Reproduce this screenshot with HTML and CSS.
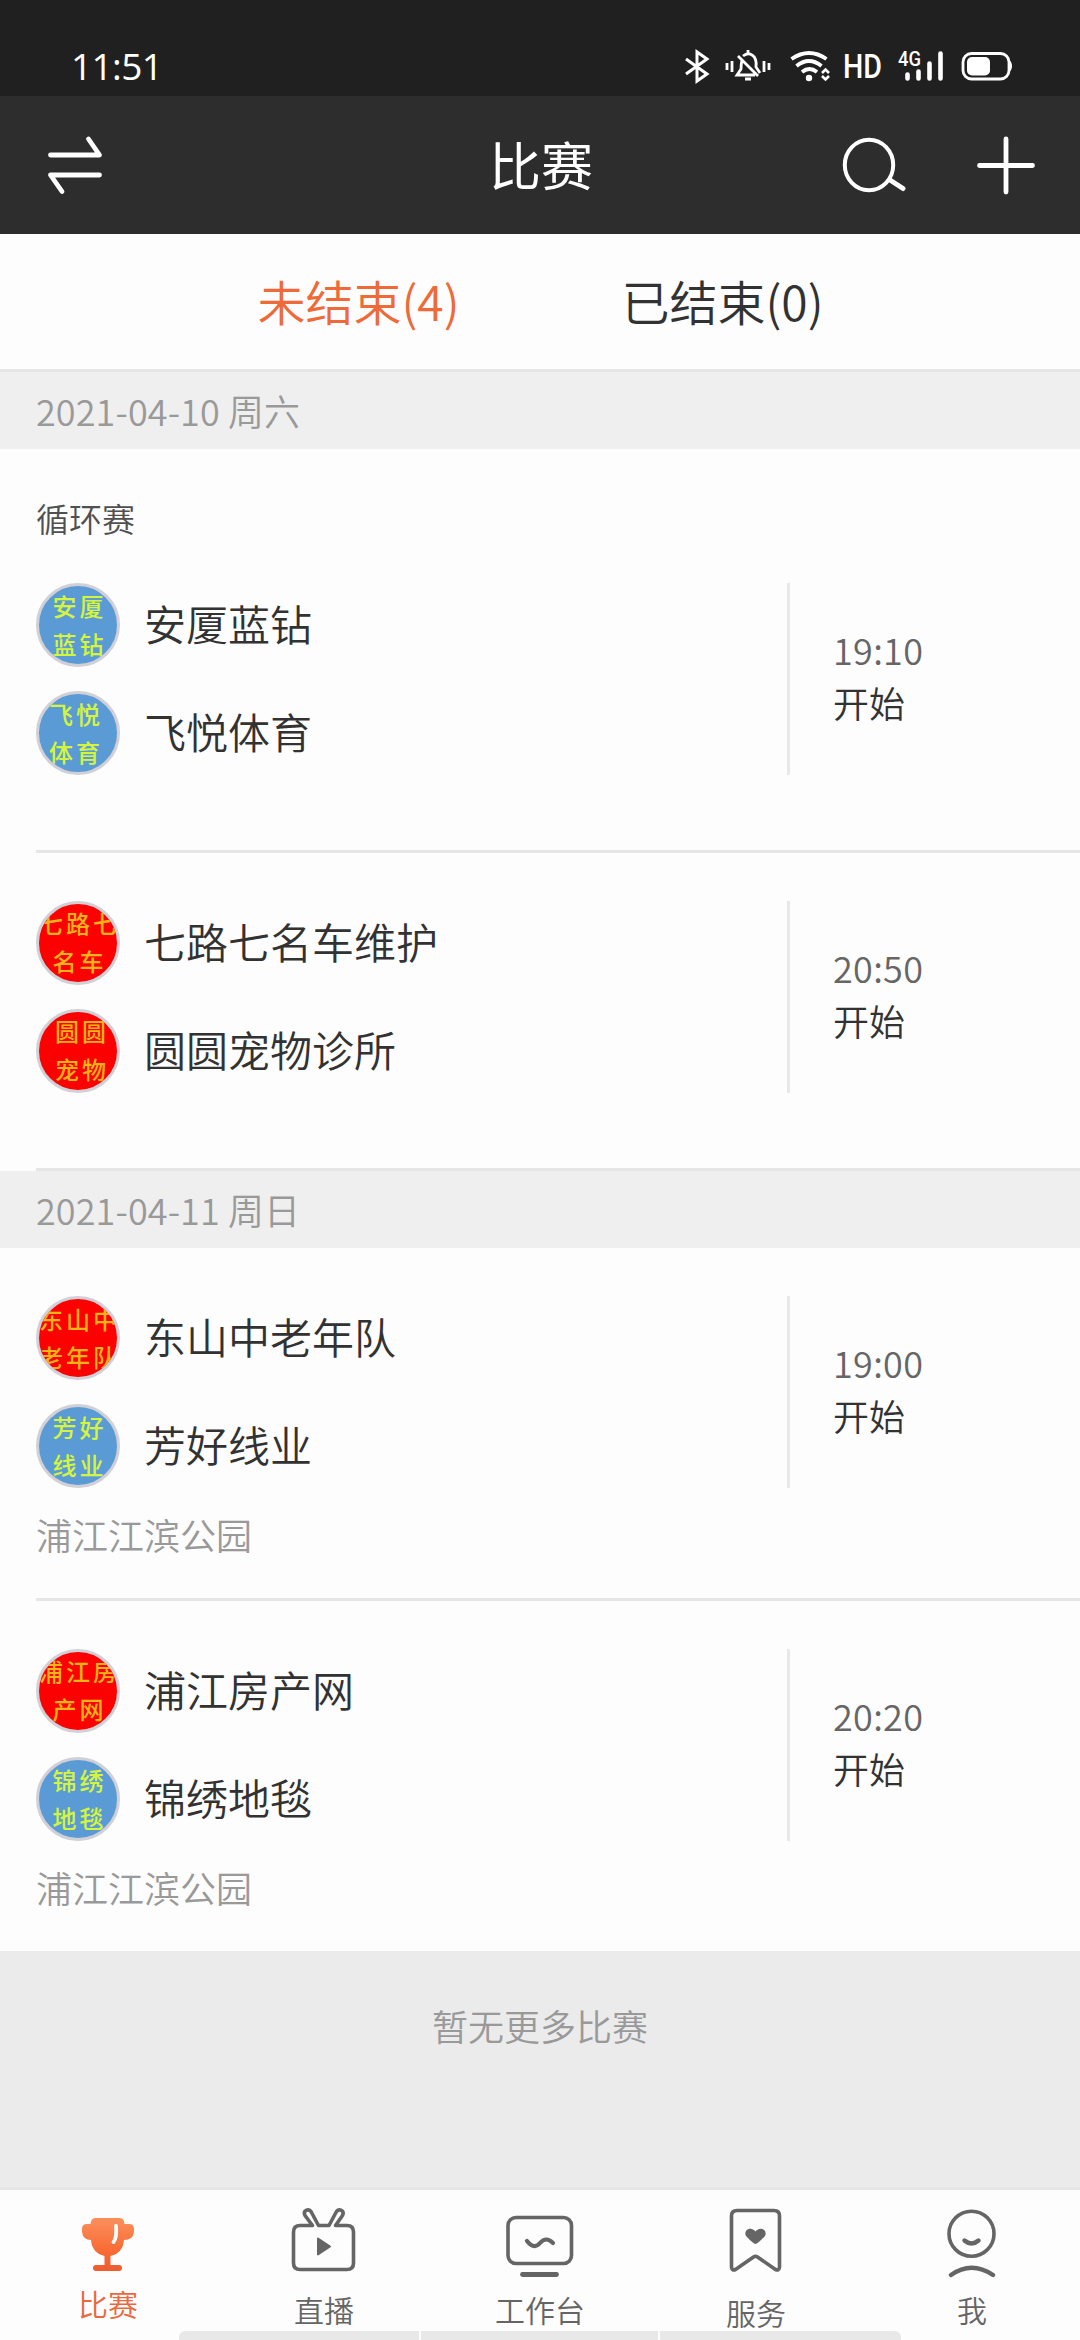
FILE: index.html
```html
<!DOCTYPE html>
<html lang="zh-CN">
<head>
<meta charset="utf-8">
<title>比赛</title>
<link rel="stylesheet" href="styles.css">
</head>
<body>
<div class="screen">
  <div class="status">
    <span class="clock">11:51</span>
    <svg class="status-icons" width="332" height="36" viewBox="0 0 332 36" fill="none" stroke="#fff">
      <path d="M5 11 26 26 16 33V4L26 11 5 26" stroke-width="3"/>
      <g stroke-width="2.8">
        <path d="M46 15v7M51 13v11M83 13v11M88 15v7"/>
        <path d="M61 12q-1 4-1 9l-4 6h18M62 8q5-4 9-1 5 3 4 12l4 6M57 8l20 20M67 5V2M64 31h6"/>
      </g>
      <g stroke-width="3.8">
        <path d="M110.500 11q17.500-12 35 0M115.500 18q12.500-10 25 0M121 24q7.500-6 15 0"/>
        <circle cx="128" cy="30" r="3.200" fill="#fff" stroke="none"/>
        <path d="M141 25l3.500-3.500 3.500 3.500M141 28l3.500 3.500 3.500-3.500" stroke-width="2.600"/>
      </g>
      <g class="status-text">
        <text x="162" y="30" font-size="33" textLength="39" lengthAdjust="spacingAndGlyphs">HD</text>
        <text x="217" y="17.500" font-size="20.500" textLength="23" lengthAdjust="spacingAndGlyphs">4G</text>
      </g>
      <path d="M226.500 26.500v4M237.500 23.500v7M248.500 15.500v15M259.500 5.500v25" stroke-width="4.600" stroke-linecap="round"/>
      <rect x="282" y="5.500" width="46" height="25.500" rx="8.500" stroke-width="2.800"/>
      <rect x="286" y="9" width="23" height="18.500" rx="5" fill="#fff" stroke="none"/>
      <path d="M328 12q3 2 3 6t-3 6z" fill="#fff" stroke="none"/>
    </svg>
  </div>
  <header class="nav">
    <svg width="60" height="60" viewBox="0 0 60 60" fill="none" stroke="#fff" stroke-width="4.800" stroke-linecap="round" stroke-linejoin="round">
      <path d="M5.500 20H54.500L43.500 4M54.500 40H5.500L17 56.500"/>
    </svg>
    <h1 class="title">比赛</h1>
    <div class="actions">
      <svg width="66" height="60" viewBox="0 0 66 60" fill="none" stroke="#fff" stroke-width="4" stroke-linecap="round">
        <ellipse cx="29" cy="30" rx="24.200" ry="25.200"/><path d="M50 45l13 8.500" stroke-width="5"/>
      </svg>
      <svg width="60" height="60" viewBox="0 0 60 60" fill="none" stroke="#fff" stroke-width="4.800" stroke-linecap="round">
        <path d="M3.500 30.500h53M30 4v53"/>
      </svg>
    </div>
  </header>
  <nav class="tabs">
    <span class="tab tab-on">未结束(4)</span>
    <span class="tab">已结束(0)</span>
  </nav>
  <main>
    <div class="date">2021-04-10 周六</div>
    <section class="match">
      <div class="stage">循环赛</div>
      <div class="row">
        <div class="teams">
          <div class="team"><span class="logo blue"><span>安厦</span><span>蓝钻</span></span><span class="name">安厦蓝钻</span></div>
          <div class="team"><span class="logo blue left"><span>飞悦</span><span>体育</span></span><span class="name">飞悦体育</span></div>
        </div>
        <div class="time"><span class="clock-time">19:10</span><b>开始</b></div>
      </div>
      <div class="foot"></div>
    </section>
    <section class="match">
      <div class="row">
        <div class="teams">
          <div class="team"><span class="logo red high"><span>七路七</span><span>名车</span></span><span class="name">七路七名车维护</span></div>
          <div class="team"><span class="logo red high right"><span>圆圆</span><span>宠物</span></span><span class="name">圆圆宠物诊所</span></div>
        </div>
        <div class="time"><span class="clock-time">20:50</span><b>开始</b></div>
      </div>
      <div class="foot"></div>
    </section>
    <div class="date">2021-04-11 周日</div>
    <section class="match">
      <div class="row">
        <div class="teams">
          <div class="team"><span class="logo red"><span>东山中</span><span>老年队</span></span><span class="name">东山中老年队</span></div>
          <div class="team"><span class="logo blue"><span>芳好</span><span>线业</span></span><span class="name">芳好线业</span></div>
        </div>
        <div class="time"><span class="clock-time">19:00</span><b>开始</b></div>
      </div>
      <div class="foot venue">浦江江滨公园</div>
    </section>
    <section class="match last">
      <div class="row">
        <div class="teams">
          <div class="team"><span class="logo red high"><span>浦江房</span><span>产网</span></span><span class="name">浦江房产网</span></div>
          <div class="team"><span class="logo blue"><span>锦绣</span><span>地毯</span></span><span class="name">锦绣地毯</span></div>
        </div>
        <div class="time"><span class="clock-time">20:20</span><b>开始</b></div>
      </div>
      <div class="foot venue">浦江江滨公园</div>
    </section>
    <p class="end">暂无更多比赛</p>
  </main>
  <footer class="bar">
    <a class="item item-on">
      <svg class="icon" viewBox="0 0 72 72">
        <defs><linearGradient id="cup" x1="0" y1="0" x2="0" y2="1"><stop offset="0" stop-color="#fa905d"/><stop offset=".6" stop-color="#f96c35"/><stop offset="1" stop-color="#ec5d31"/></linearGradient></defs>
        <path fill="url(#cup)" d="M23 12H48Q52 12 52.500 18H57Q62 18 62 23V26Q61 34 52 34Q51 47 38.500 50V59H47Q50 59 50 62T47 65H24Q21 65 21 62T24 59H32.500V50Q20 47 19 34Q11 34 10 26V23Q10 18 15 18H18.500Q19 12 23 12Z"/>
        <path d="M44 20Q45 32 41.500 36" fill="none" stroke="#fff" stroke-width="3.800" stroke-linecap="round"/>
      </svg>
      <span>比赛</span>
    </a>
    <a class="item">
      <svg class="icon line" viewBox="0 0 72 72">
        <path d="M24.500 19.500H12Q5.500 19.500 5.500 26V57Q5.500 63.500 12 63.500H59Q65.500 63.500 65.500 57V26Q65.500 19.500 59 19.500H47.500L54.500 9.500C57 4 51 2.500 48.500 5.500L41 19.500H30.500L23 5.500C20.500 2.500 14.500 4 17 9.500Z"/>
        <path d="M30 32.500 42 40.500 30 48.500Z" fill="#656565" stroke-width="2"/>
      </svg>
      <span>直播</span>
    </a>
    <a class="item">
      <svg class="icon line" viewBox="0 0 72 72">
        <rect x="4" y="11.500" width="63.500" height="46" rx="8"/>
        <path d="M23 35Q30 44 36 37T49 37" stroke-width="4.200"/>
        <path d="M18.500 68.500H52.500" stroke-width="4.800"/>
      </svg>
      <span>工作台</span>
    </a>
    <a class="item item-low">
      <svg class="icon line" viewBox="0 0 72 72">
        <path d="M17 4.500H54Q59.500 4.500 59.500 10V61Q59 65 55.500 63.500L37.500 51Q35.500 49.500 33.500 51L15.500 63.500Q12 65 11.500 61V10Q11.500 4.500 17 4.500Z"/>
        <path d="M35.500 38Q33.500 38 26 30C23 24 31 19.500 35.500 25.500C40 19.500 48 24 45 30Q37.500 38 35.500 38Z" fill="#656565" stroke="none"/>
      </svg>
      <span>服务</span>
    </a>
    <a class="item">
      <svg class="icon line" viewBox="0 0 72 72">
        <circle cx="35.500" cy="27.700" r="22.500"/>
        <path d="M28.500 34.500Q35.500 40.500 42.500 34.500" stroke-width="4.400"/>
        <path d="M15 69Q35.500 54.500 57 69" stroke-width="4.400"/>
      </svg>
      <span>我</span>
    </a>
    <div class="dock"><i></i><i></i><i></i></div>
  </footer>
</div>
</body>
</html>
```
FILE: styles.css
```css
* { box-sizing: border-box; }
body {
  margin: 0;
  font-family: "Noto Sans CJK SC", sans-serif;
  font-weight: 350;
  color: #323232;
  background: #ebebeb;
}
.screen { width: 1080px; height: 2340px; display: flex; flex-direction: column; overflow: hidden; }
.status {
  height: 96px; padding: 48px 67px 0 71px; display: flex; justify-content: space-between;
  background: #202020; color: #fff;
}
.clock { font: 500 37px/36px "Open Sans", sans-serif; letter-spacing: -0.6px; }
.status-icons { overflow: visible; }
.status-text { fill: #fff; stroke: none; font-family: Roboto, sans-serif; font-weight: 500; }
.nav {
  height: 138px; padding: 0 44px 0 45px; display: grid; grid-template-columns: 200px 1fr 196px;
  align-items: center; background: #2d2d2d; color: #fff;
}
.title { margin: 0; padding: 0 0 2px 0; text-align: center; font-size: 52px; font-weight: 400; line-height: 60px; text-indent: -3px; }
.actions { display: flex; justify-content: space-between; }
.tabs { height: 138px; display: flex; justify-content: center; background: #fdfdfd; border-bottom: 3px solid #e6e6e6; }
.tab { width: 364px; padding-left: 1px; text-align: center; font-size: 48px; line-height: 132px; }
.tab-on { color: #ee6a39; }
.date { height: 77px; padding-left: 36px; font-size: 36px; line-height: 76px; letter-spacing: 0.1px; color: #999; background: #efefef; }
.match { padding-top: 48px; background: #fdfdfd; }
.stage { height: 86px; padding-left: 36px; font-size: 33px; line-height: 42px; color: #505050; }
.row { display: flex; justify-content: space-between; padding-left: 36px; }
.teams { display: flex; flex-direction: column; gap: 24px; }
.team { display: flex; align-items: center; gap: 24px; height: 84px; font-size: 42px; }
.name { padding-bottom: 5px; }
.logo {
  width: 84px; height: 84px; flex: none; border: 3px solid #d0d0d6; border-radius: 50%; overflow: hidden;
  display: flex; flex-direction: column; align-items: center; justify-content: center; gap: 14px;
  font-size: 24px; line-height: 24px; font-weight: 500; letter-spacing: 3px; white-space: nowrap;
}
.logo span { margin-right: -3px; }
.blue { background: #5b9bd5; color: #d5f53c; }
.red { background: #fb0200; color: #fcb316; }
.left { padding-right: 7px; }
.right { padding-left: 5px; }
.high { padding-bottom: 3px; }
.time {
  width: 293px; padding: 0 0 7px 43px; border-left: 3px solid #e8e8e8; display: flex; flex-direction: column;
  justify-content: center; font-size: 36px; line-height: 53px; color: #666;
}
.clock-time { letter-spacing: 0.3px; }
.time b { font-weight: inherit; color: #323232; }
.foot { height: 78px; margin-left: 36px; border-bottom: 3px solid #e6e6e6; }
.venue { height: 113px; font-size: 36px; line-height: 93px; color: #999; }
.last .foot { height: 110px; border: 0; }
.end { margin: 0; padding-top: 47px; text-align: center; font-size: 36px; line-height: 54px; color: #999; }
.bar {
  position: relative; height: 153px; margin-top: auto; padding-top: 16px; border-top: 3px solid #e5e5e5;
  display: grid; grid-template-columns: repeat(5, 1fr); background: #fdfdfd;
}
.item { display: flex; flex-direction: column; align-items: center; gap: 16px; font-size: 30px; line-height: 30px; color: #656565; }
.item-on { gap: 10px; color: #e8683f; }
.item-low { gap: 19px; }
.icon { width: 72px; height: 72px; flex: none; }
.line { fill: none; stroke: #656565; stroke-width: 3.6; stroke-linecap: round; stroke-linejoin: round; }
.dock {
  position: absolute; left: 179px; bottom: 0; width: 722px; height: 9px; display: grid;
  grid-template-columns: 240px 237px 1fr; gap: 2px; border-radius: 6px 6px 0 0; overflow: hidden;
}
.dock i { background: #e8e8e8; }
```
